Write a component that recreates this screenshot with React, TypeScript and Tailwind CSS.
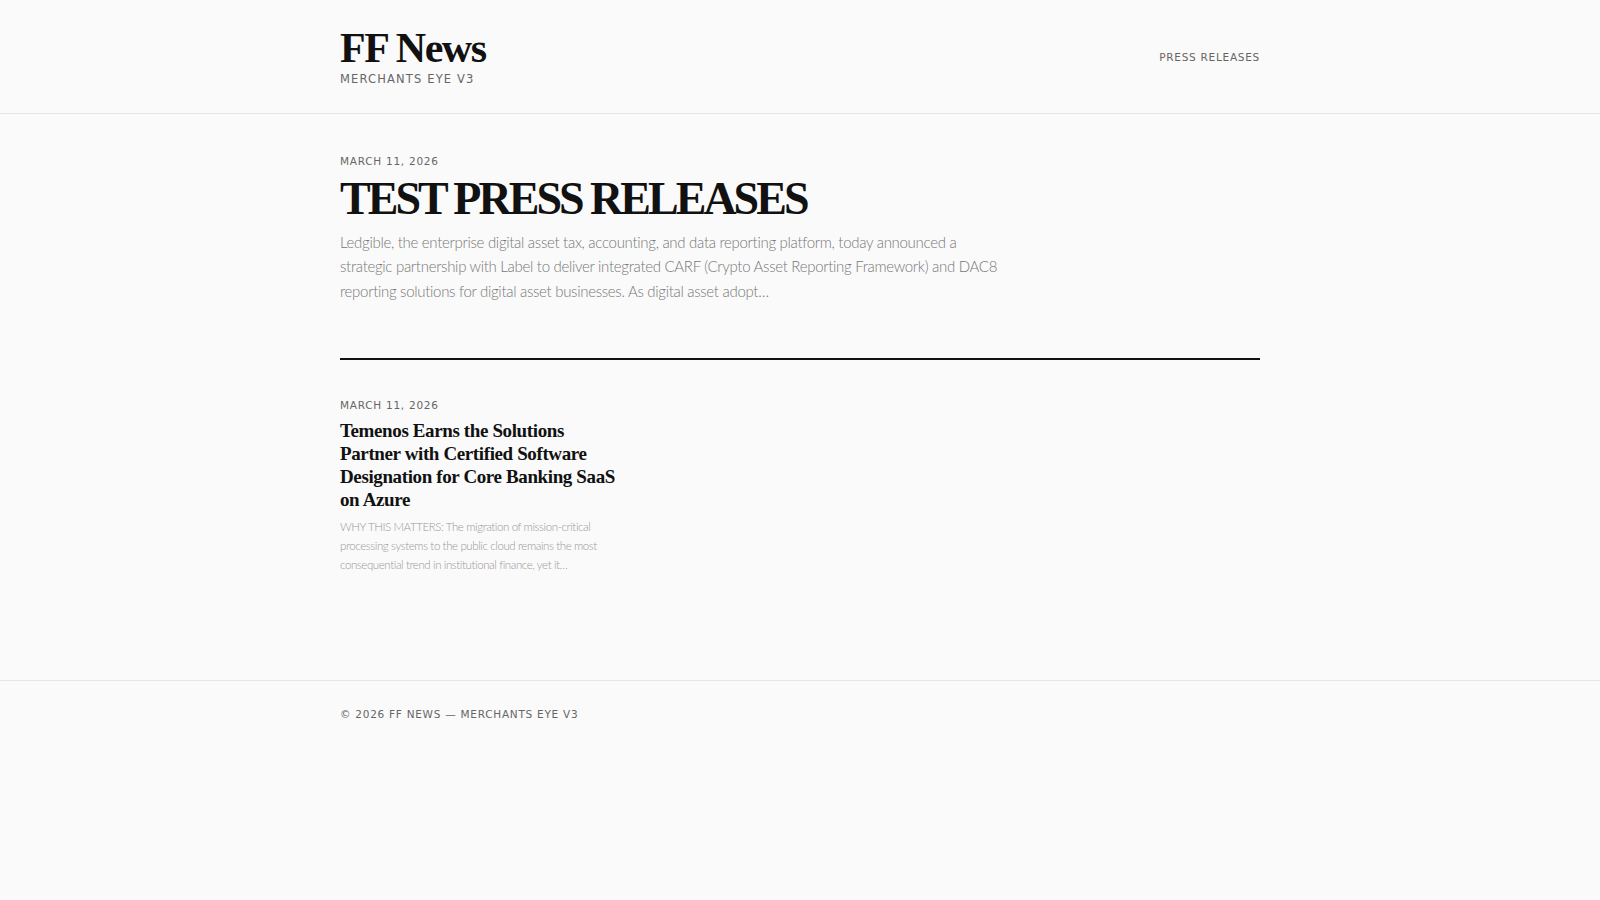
import React from 'react'

const serif = { fontFamily: '"Liberation Serif", "DejaVu Serif", serif' }

type Story = {
  date: string
  title: string
  excerpt: string
}

const featured: Story = {
  date: 'March 11, 2026',
  title: 'TEST PRESS RELEASES',
  excerpt:
    'Ledgible, the enterprise digital asset tax, accounting, and data reporting platform, today announced a strategic partnership with Label to deliver integrated CARF (Crypto Asset Reporting Framework) and DAC8 reporting solutions for digital asset businesses. As digital asset adopt…',
}

const stories: Story[] = [
  {
    date: 'March 11, 2026',
    title: 'Temenos Earns the Solutions Partner with Certified Software Designation for Core Banking SaaS on Azure',
    excerpt:
      'WHY THIS MATTERS: The migration of mission-critical processing systems to the public cloud remains the most consequential trend in institutional finance, yet it…',
  },
]

export default function App() {
  return (
    <div className="min-h-screen bg-[#fafafa] text-[#111] font-['Lato',sans-serif]">
      <header className="border-b border-[#e6e6e6]">
        <div className="mx-auto flex h-[113px] max-w-[960px] items-center justify-between px-5">
          <div className="pt-[1px]">
            <h1 style={serif} className="text-[42px] font-bold leading-[44px] tracking-[-0.035em] text-[#111]">
              FF News
            </h1>
            <p className="mt-[1px] font-['DejaVu_Sans',sans-serif] text-[11.5px] uppercase tracking-[0.1em] text-[#666]">
              Merchants Eye V3
            </p>
          </div>
          <nav className="pt-[2px] font-['DejaVu_Sans',sans-serif] text-[10.5px] uppercase tracking-[0.07em] text-[#666]">
            Press Releases
          </nav>
        </div>
      </header>

      <main className="mx-auto max-w-[960px] px-5 pb-[106px] pt-[40px]">
        <article className="border-b-2 border-[#111] pb-[55px]">
          <p className="font-['DejaVu_Sans',sans-serif] text-[10.5px] uppercase tracking-[0.07em] text-[#666]">
            {featured.date}
          </p>
          <h2
            style={serif}
            className="mt-[4px] text-[46px] font-bold leading-[50px] tracking-[-0.065em] text-[#111]"
          >
            {featured.title}
          </h2>
          <p className="mt-[6px] max-w-[672px] text-[15px] font-light leading-[24.5px] tracking-[-0.02em] text-[#777]">
            {featured.excerpt}
          </p>
        </article>

        <div className="grid grid-cols-3 gap-8 pt-[38px]">
          {stories.map((s) => (
            <article key={s.title}>
              <p className="font-['DejaVu_Sans',sans-serif] text-[10.5px] uppercase tracking-[0.07em] text-[#666]">
                {s.date}
              </p>
              <h3
                style={serif}
                className="mt-[5px] text-[19px] font-bold leading-[23px] tracking-[-0.02em] text-[#111]"
              >
                {s.title}
              </h3>
              <p className="mt-[6px] text-[11.5px] font-light leading-[19px] tracking-[-0.035em] text-[#999]">
                {s.excerpt}
              </p>
            </article>
          ))}
        </div>
      </main>

      <footer className="border-t border-[#e6e6e6]">
        <div className="mx-auto max-w-[960px] px-5 py-[26px]">
          <p className="font-['DejaVu_Sans',sans-serif] text-[10.5px] uppercase tracking-[0.07em] text-[#666]">
            © 2026 FF News — Merchants Eye V3
          </p>
        </div>
      </footer>
    </div>
  )
}
